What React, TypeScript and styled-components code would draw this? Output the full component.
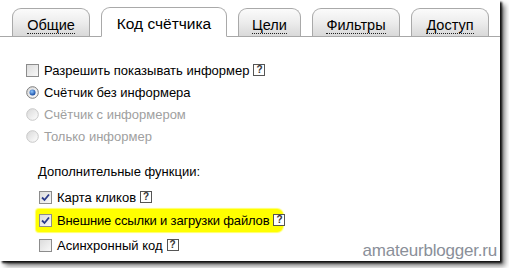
import React from "react";
import styled, { createGlobalStyle } from "styled-components";

const Global = createGlobalStyle`
  html, body { margin: 0; padding: 0; background: #fff; }
  body { font-family: "Liberation Sans", Arial, sans-serif; }
`;

const Frame = styled.div`
  width: 509px;
  height: 268px;
  background: #fff;
  position: relative;
  overflow: hidden;
`;

const Panel = styled.div`
  width: 500px;
  height: 261px;
  background: #fff;
  box-shadow: 2px 2px 2px rgba(0, 0, 0, 0.9), 5px 5px 5px rgba(0, 0, 0, 0.5);
  display: flex;
  flex-direction: column;
`;

const TabBar = styled.div`
  display: flex;
  align-items: flex-end;
  gap: 11px;
  padding: 7px 0 0 12px;
  height: 29px;
  border-bottom: 1px solid #a8a8a8;
`;

const Tab = styled.div<{ $w: number; $active?: boolean }>`
  box-sizing: border-box;
  width: ${(p) => p.$w}px;
  height: ${(p) => (p.$active ? 30 : 28)}px;
  margin-bottom: ${(p) => (p.$active ? -1 : 0)}px;
  border: 1px solid #a9a9a9;
  border-bottom: ${(p) => (p.$active ? "1px solid #fff" : "none")};
  border-radius: 9px 9px 0 0;
  background: ${(p) =>
    p.$active ? "#fff" : "linear-gradient(#fbfbfb 0%, #eeeeee 45%, #d9d9d9 100%)"};
  display: flex;
  justify-content: center;
  padding-top: ${(p) => (p.$active ? 7 : 7)}px;
`;

const TabLabel = styled.span<{ $active?: boolean }>`
  font-size: ${(p) => (p.$active ? 15.5 : 14.5)}px;
  color: #000;
  line-height: 18px;
  ${(p) => (p.$active ? "" : "border-bottom: 1px dotted #222; height: 17px;")}
`;

const Body = styled.div`
  display: flex;
  flex-direction: column;
  padding: 22px 0 0 26px;
  position: relative;
  flex: 1;
`;

const Row = styled.div<{ $indent?: number; $mt?: number; $h?: number }>`
  display: flex;
  align-items: center;
  height: ${(p) => p.$h ?? 22}px;
  margin-left: ${(p) => p.$indent ?? 0}px;
  margin-top: ${(p) => p.$mt ?? 0}px;
  font-size: 13px;
  color: #000;
`;

const Highlight = styled.div`
  display: flex;
  align-items: center;
  background: #ffff00;
  height: 23px;
  padding: 0 0 0 3px;
  margin-left: -3px;
  width: 244px;
  border-radius: 3px 6px 6px 3px;
  box-shadow: 0 0 1px 1px rgba(255, 255, 0, 0.6);
`;

const Label = styled.span<{ $disabled?: boolean; $tight?: boolean }>`
  color: ${(p) => (p.$disabled ? "#a0a0a0" : "#000")};
  margin-left: 5px;
  white-space: nowrap;
  letter-spacing: ${(p) => (p.$tight ? "-0.15px" : "0")};
`;

const Heading = styled.div`
  font-size: 13px;
  color: #000;
  margin: 16px 0 5px 12px;
  height: 18px;
  line-height: 18px;
`;

const Box = styled.span`
  box-sizing: border-box;
  width: 13px;
  height: 13px;
  border: 1px solid #8c8c8c;
  background: linear-gradient(135deg, #dcdcdc, #f8f8f8);
  display: inline-flex;
  align-items: center;
  justify-content: center;
  flex: none;
`;

const Help = styled.span`
  box-sizing: border-box;
  width: 12px;
  height: 12px;
  border: 1px solid #555;
  background: #fff;
  margin-left: 4px;
  font-size: 10px;
  font-weight: bold;
  line-height: 10px;
  color: #333;
  display: inline-flex;
  justify-content: center;
  flex: none;
`;

const Watermark = styled.div`
  position: absolute;
  right: 3px;
  bottom: 0px;
  font-size: 17px;
  color: #8a8f99;
  letter-spacing: -0.2px;
`;

const Check = () => (
  <svg width="9" height="9" viewBox="0 0 9 9">
    <path d="M1 4.5 L3.5 7 L8 1.5" stroke="#2a3a8a" strokeWidth="1.8" fill="none" />
  </svg>
);

const Checkbox = ({ checked }: { checked?: boolean }) => <Box>{checked && <Check />}</Box>;

const Radio = ({ checked, disabled }: { checked?: boolean; disabled?: boolean }) => (
  <svg width="13" height="13" viewBox="0 0 13 13" style={{ flex: "none" }}>
    <defs>
      <linearGradient id="rg" x1="0" y1="0" x2="1" y2="1">
        <stop offset="0" stopColor="#d8d8d8" />
        <stop offset="1" stopColor="#ffffff" />
      </linearGradient>
      <radialGradient id="dot" cx="0.4" cy="0.35" r="0.7">
        <stop offset="0" stopColor="#8fc8ff" />
        <stop offset="1" stopColor="#0b3f9a" />
      </radialGradient>
    </defs>
    <circle cx="6.5" cy="6.5" r="5.8" fill="url(#rg)" stroke={disabled ? "#c8c8c8" : "#7a7a7a"} strokeWidth="1" />
    {checked && <circle cx="6.5" cy="6.5" r="3" fill="url(#dot)" />}
  </svg>
);

export default function App() {
  return (
    <Frame>
      <Global />
      <Panel>
        <TabBar>
          <Tab $w={78}><TabLabel>Общие</TabLabel></Tab>
          <Tab $w={126} $active><TabLabel $active>Код счётчика</TabLabel></Tab>
          <Tab $w={63}><TabLabel>Цели</TabLabel></Tab>
          <Tab $w={88}><TabLabel>Фильтры</TabLabel></Tab>
          <Tab $w={78}><TabLabel>Доступ</TabLabel></Tab>
        </TabBar>
        <Body>
          <Row>
            <Checkbox />
            <Label>Разрешить показывать информер</Label>
            <Help>?</Help>
          </Row>
          <Row>
            <Radio checked />
            <Label>Счётчик без информера</Label>
          </Row>
          <Row>
            <Radio disabled />
            <Label $disabled>Счётчик с информером</Label>
          </Row>
          <Row>
            <Radio disabled />
            <Label $disabled>Только информер</Label>
          </Row>
          <Heading>Дополнительные функции:</Heading>
          <Row $indent={13}>
            <Checkbox checked />
            <Label>Карта кликов</Label>
            <Help>?</Help>
          </Row>
          <Row $indent={13} $h={24}>
            <Highlight>
              <Checkbox checked />
              <Label $tight>Внешние ссылки и загрузки файлов</Label>
              <Help>?</Help>
            </Highlight>
          </Row>
          <Row $indent={13} $mt={2}>
            <Checkbox />
            <Label>Асинхронный код</Label>
            <Help>?</Help>
          </Row>
          <Watermark>amateurblogger.ru</Watermark>
        </Body>
      </Panel>
    </Frame>
  );
}
